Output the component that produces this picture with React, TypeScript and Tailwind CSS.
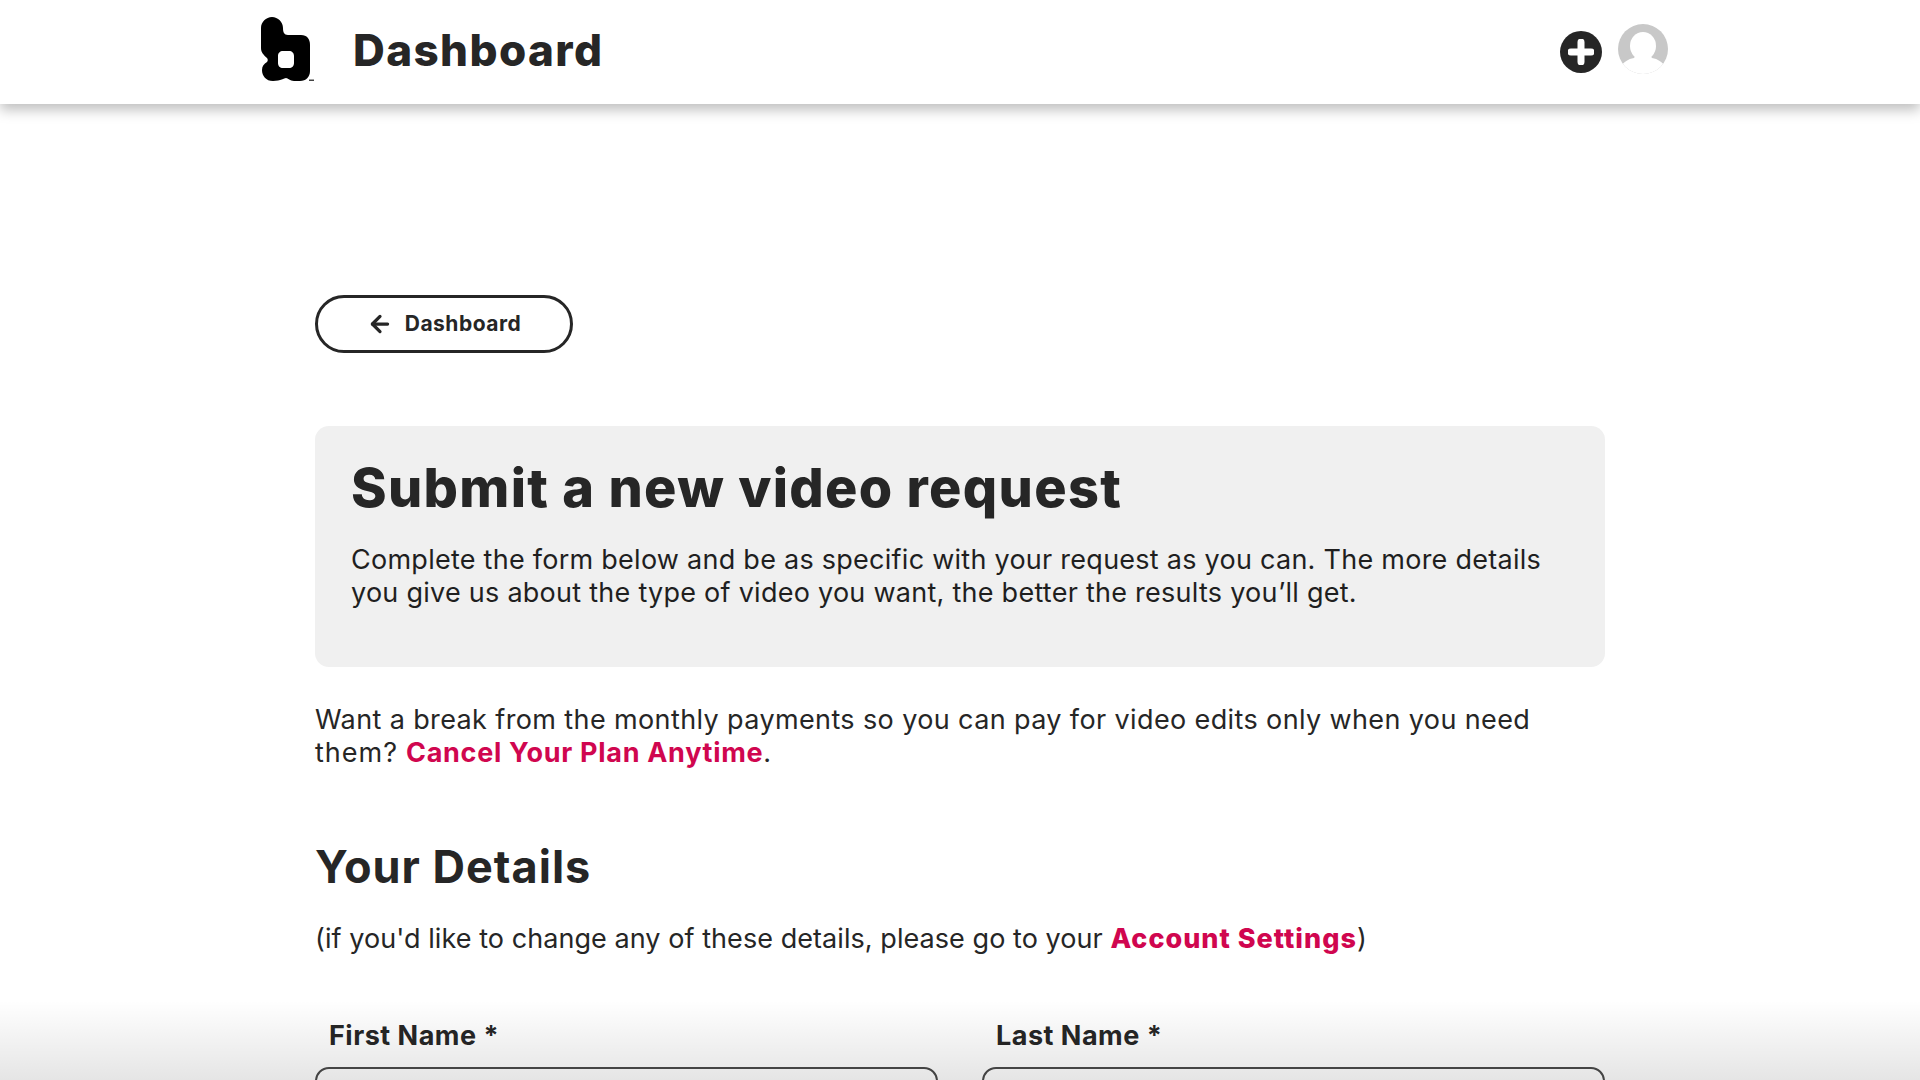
import { ArrowLeft } from 'lucide-react'

const font = { fontFamily: 'Inter, "Noto Sans", sans-serif' }

function Logo() {
  return (
    <svg viewBox="0 0 55 65" className="w-[55px] h-[65px]">
      <path
        fill="#000"
        fillRule="evenodd"
        d="M11 0C17 0 22 5 22 11C22 15 23 18 27 18H40C46 18 49 22 49 28V54C49 60 45 64 39 64H33C29 64 27 61 25 61C23 61 20 64 12 64C5 64 1 59 1 53C1 49 3 47 6 45C7 44 7 42 6 41C3 38 0 36 0 31V11C0 5 5 0 11 0ZM22 34C19 34 17 36 17 39V46C17 49 19 51 22 51H28C31 51 33 49 33 46V39C33 36 31 34 28 34Z"
      />
      <rect x="48" y="62.5" width="5" height="1.5" fill="#444" />
    </svg>
  )
}

function Avatar() {
  return (
    <svg viewBox="0 0 52 52" className="w-[52px] h-[52px] mb-[2px]">
      <defs>
        <clipPath id="av">
          <circle cx="26" cy="26" r="25" />
        </clipPath>
      </defs>
      <circle cx="26" cy="26" r="25" fill="#c8c8c8" />
      <g clipPath="url(#av)" fill="#fff">
        <ellipse cx="26" cy="23" rx="13" ry="14" />
        <path d="M20 30h12l3 5c6 1 10 4 13 8v10H4V43c3-4 7-7 13-8z" />
      </g>
    </svg>
  )
}

export default function App() {
  return (
    <div className="h-[1080px] overflow-hidden bg-white text-[#262626] relative" style={font}>
      <header className="h-[104px] pb-[5px] bg-white shadow-[0_6px_12px_rgba(0,0,0,0.25)] flex items-center pl-[261px] pr-[251px] relative">
        <Logo />
        <h1 className="ml-[37px] text-[44px] font-extrabold tracking-[1.4px] leading-none">Dashboard</h1>
        <div className="ml-auto flex items-center gap-[15px]">
          <span className="w-[42px] h-[42px] rounded-full bg-[#262626] flex items-center justify-center mt-[5px]">
            <svg viewBox="0 0 26 26" className="w-[26px] h-[26px]">
              <path d="M13 3v20M3 13h20" stroke="#fff" strokeWidth="7" strokeLinecap="round" />
            </svg>
          </span>
          <Avatar />
        </div>
      </header>

      <main className="w-[1290px] ml-[315px] pt-[191px]">
        <a className="w-[258px] h-[58px] rounded-full border-[3px] border-[#262626] flex items-center justify-center gap-[12px] font-bold text-[21px] tracking-[0.5px]">
          <ArrowLeft className="w-[26px] h-[26px]" strokeWidth={3} />
          Dashboard
        </a>

        <section className="mt-[73px] h-[241px] rounded-[14px] bg-[#f0f0f0] px-9 pt-[30px]">
          <h2 className="text-[54px] font-extrabold tracking-[1.3px] leading-[64px]">Submit a new video request</h2>
          <p className="mt-[23px] text-[27px] tracking-[0.26px] leading-[33px] text-[#1f1f1f]">
            Complete the form below and be as specific with your request as you can. The more details
            you give us about the type of video you want, the better the results you’ll get.
          </p>
        </section>

        <p className="mt-[36px] text-[27px] tracking-[0.38px] leading-[33px]">
          Want a break from the monthly payments so you can pay for video edits only when you need{' '}
          <span className="tracking-[1px]">them?</span>{' '}
          <a className="font-bold tracking-[0.7px] text-[#d0064f]">Cancel Your Plan Anytime</a>.
        </p>

        <h2 className="mt-[71px] text-[45px] font-bold tracking-[1px] leading-[54px]">Your Details</h2>
        <p className="mt-[28px] text-[27px] tracking-[0.06px] leading-[33px]">
          (if you'd like to change any of these details, please go to your{' '}
          <a className="font-extrabold tracking-[1px] text-[#d0064f]">Account Settings</a>)
        </p>

        <div className="mt-[64px] grid grid-cols-2 gap-x-[44px]">
          <div>
            <label className="block pl-[14px] text-[27px] font-bold tracking-[0.5px] leading-[34px]">First Name *</label>
            <div className="mt-[14px] h-[60px] rounded-[14px] border-2 border-[#4a4a4a]" />
          </div>
          <div>
            <label className="block pl-[14px] text-[27px] font-bold tracking-[0.5px] leading-[34px]">Last Name *</label>
            <div className="mt-[14px] h-[60px] rounded-[14px] border-2 border-[#4a4a4a]" />
          </div>
        </div>
      </main>

      <div className="absolute left-0 right-0 bottom-0 h-[80px] bg-gradient-to-b from-transparent to-[#0000001a] pointer-events-none" />
    </div>
  )
}
